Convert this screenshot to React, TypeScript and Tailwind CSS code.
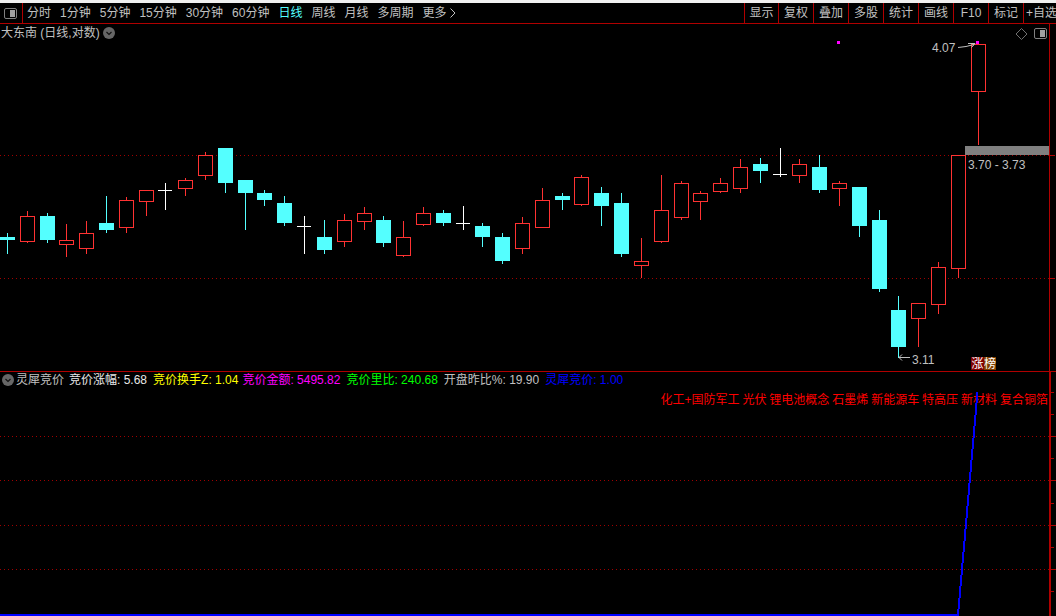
type Candle = [number, "r" | "c" | "w", number, number, number, number];

// x, kind, high, body top, body bottom, low
const candles: Candle[] = [
  [7, "c", 233, 237, 240, 254],
  [27, "r", 211, 216, 241, 243],
  [47, "c", 213, 216, 240, 243],
  [66, "r", 224, 240, 244, 257],
  [86, "r", 221, 233, 248, 254],
  [106, "c", 196, 223, 230, 233],
  [126, "r", 197, 200, 227, 233],
  [146, "r", 190, 190, 201, 216],
  [165, "w", 183, 190, 190, 210],
  [185, "r", 178, 180, 188, 196],
  [205, "r", 152, 155, 175, 180],
  [225, "c", 148, 148, 183, 193],
  [245, "c", 180, 180, 193, 230],
  [264, "c", 190, 193, 200, 206],
  [284, "c", 196, 203, 223, 226],
  [304, "w", 216, 226, 226, 254],
  [324, "c", 220, 237, 250, 254],
  [344, "r", 214, 220, 241, 247],
  [364, "r", 207, 213, 221, 230],
  [383, "c", 216, 220, 243, 247],
  [403, "r", 221, 237, 255, 257],
  [423, "r", 207, 213, 224, 226],
  [443, "c", 210, 213, 223, 226],
  [463, "w", 206, 223, 223, 230],
  [482, "c", 223, 226, 237, 247],
  [502, "c", 233, 237, 261, 264],
  [522, "r", 217, 223, 248, 254],
  [542, "r", 188, 200, 227, 227],
  [562, "c", 193, 196, 200, 210],
  [581, "r", 175, 177, 204, 206],
  [601, "c", 187, 193, 206, 226],
  [621, "c", 193, 203, 254, 257],
  [641, "r", 238, 261, 265, 278],
  [661, "r", 175, 210, 241, 243],
  [681, "r", 181, 183, 217, 220],
  [700, "r", 191, 193, 201, 220],
  [720, "r", 178, 183, 191, 193],
  [740, "r", 159, 167, 188, 193],
  [760, "c", 158, 164, 171, 183],
  [780, "w", 148, 174, 174, 177],
  [799, "r", 159, 164, 175, 183],
  [819, "c", 155, 167, 190, 193],
  [839, "r", 181, 183, 188, 206],
  [859, "c", 187, 187, 226, 237],
  [879, "c", 210, 220, 289, 292],
  [898, "c", 296, 310, 347, 358],
  [918, "r", 303, 303, 318, 347],
  [938, "r", 262, 267, 304, 314],
  [958, "r", 155, 155, 268, 278],
  [978, "r", 44, 44, 91, 145],
];

const periods = ["分时", "1分钟", "5分钟", "15分钟", "30分钟", "60分钟", "日线", "周线", "月线", "多周期"];
const tools: [string, string][] = [
  ["显示", "w-[34px]"],
  ["复权", "w-[35px]"],
  ["叠加", "w-[35px]"],
  ["多股", "w-[35px]"],
  ["统计", "w-[35px]"],
  ["画线", "w-[35px]"],
  ["F10", "w-[35px]"],
  ["标记", "w-[35px]"],
];
const lowerGrid = [436, 480, 525, 569];

const CandleMark = ({ c }: { c: Candle }) => {
  const [x, kind, high, top, bottom, low] = c;
  const px = x + 0.5;
  if (kind === "w") {
    return (
      <g stroke="#ffffff" shapeRendering="crispEdges">
        <line x1={px} x2={px} y1={high} y2={low} />
        <line x1={x - 7} x2={x + 7} y1={top + 0.5} y2={top + 0.5} />
      </g>
    );
  }
  if (kind === "c") {
    return (
      <g shapeRendering="crispEdges">
        <line x1={px} x2={px} y1={high} y2={low} stroke="#54ffff" />
        <rect x={x - 7} y={top} width={15} height={bottom - top} fill="#54ffff" />
      </g>
    );
  }
  return (
    <g stroke="#ff3232" shapeRendering="crispEdges">
      <line x1={px} x2={px} y1={high} y2={top} />
      <line x1={px} x2={px} y1={bottom} y2={low} />
      <rect x={x - 6.5} y={top + 0.5} width={14} height={bottom - top} fill="#000000" />
    </g>
  );
};

const Chevron = () => (
  <svg width="12" height="12" viewBox="0 0 12 12" className="shrink-0">
    <circle cx="6" cy="6" r="6" fill="#666666" />
    <path d="M3.5 5 L6 7.5 L8.5 5" fill="none" stroke="#111111" strokeWidth="1.2" />
  </svg>
);

const PaneToggle = () => (
  <span className="flex h-[11px] w-[13px] justify-end rounded-[2px] border border-[#808080] p-px">
    <span className="h-full w-[5px] bg-[#a0a0a0]" />
  </span>
);

export default function App() {
  return (
    <div
      className="flex h-[616px] w-[1056px] flex-col overflow-hidden bg-black text-[12px] leading-none text-[#c0c0c0]"
      style={{ fontFamily: '"Liberation Sans", "Noto Sans CJK SC", sans-serif' }}
    >
      <div className="h-[3px] shrink-0 bg-[#f0f0f0]" />

      {/* toolbar */}
      <div className="flex h-[21px] shrink-0 items-center border-b border-[#b00000]">
        <div className="flex h-full w-[23px] shrink-0 items-center justify-center border-r border-[#b00000] pr-px">
          <PaneToggle />
        </div>
        <div className="flex items-center gap-[9px] pl-[4px]">
          {periods.map((p) => (
            <span key={p} className={p === "日线" ? "text-[#54ffff]" : ""}>
              {p}
            </span>
          ))}
          <span className="flex items-center gap-[3px]">
            更多
            <svg width="6" height="10" viewBox="0 0 6 10">
              <path d="M0.5 0.5 L5 5 L0.5 9.5" fill="none" stroke="#c0c0c0" />
            </svg>
          </span>
        </div>
        <div className="ml-auto flex h-full">
          {tools.map(([t, w]) => (
            <span key={t} className={`flex h-full items-center justify-center border-l border-[#b00000] ${w}`}>
              {t}
            </span>
          ))}
          <span className="flex h-full w-[33px] items-center overflow-hidden whitespace-nowrap border-l border-[#b00000] pl-[2px]">
            +自选
          </span>
        </div>
      </div>

      {/* panes */}
      <div className="relative flex min-h-0 flex-1 flex-col">
        <div className="relative h-[348px] shrink-0 border-b border-[#b00000]">
          <svg width="1056" height="347" viewBox="0 24 1056 347" className="block">
            <g stroke="#a00000" strokeDasharray="1 3" shapeRendering="crispEdges">
              <line x1="0" x2="1049" y1="155.5" y2="155.5" />
              <line x1="0" x2="1049" y1="278.5" y2="278.5" />
            </g>
            <rect x="965" y="146" width="84" height="9" fill="#808080" />
            {candles.map((c) => (
              <CandleMark key={c[0]} c={c} />
            ))}
            <rect x="837" y="41" width="3" height="3" fill="#ff00ff" />
            <path d="M958 47.5 L966 46.5 L974 44.5 M968 43.5 L975 43.5 L971.5 47.5" fill="none" stroke="#c0c0c0" />
            <rect x="976" y="41" width="3" height="3" fill="#ff00ff" />
            <path d="M899 357.5 L910 357.5 M902 354.5 L899 357.5 L902 360.5" fill="none" stroke="#c0c0c0" />
            <g stroke="#b00000" shapeRendering="crispEdges">
              <line x1="1049.5" x2="1049.5" y1="24" y2="371" />
              <line x1="1050" x2="1055" y1="155.5" y2="155.5" />
              <line x1="1050" x2="1055" y1="278.5" y2="278.5" />
            </g>
            <path d="M1021.5 28.5 L1027 34 L1021.5 39.5 L1016 34 Z" fill="none" stroke="#707070" />
          </svg>

          {/* overlays on the price chart */}
          <div className="absolute left-[1px] top-[3px] flex items-center gap-[3px]">
            <span>大东南 (日线,对数)</span>
            <Chevron />
          </div>
          <div className="absolute left-[1034px] top-[4px]">
            <PaneToggle />
          </div>
          <span className="absolute left-[932px] top-[18px]">4.07</span>
          <span className="absolute left-[968px] top-[135px]">3.70 - 3.73</span>
          <span className="absolute left-[912px] top-[330px]">3.11</span>
          <div className="absolute left-[971px] top-[333px] flex text-white">
            <span className="flex h-[13px] w-[13px] items-center justify-center bg-[#800000]">涨</span>
            <span className="flex h-[13px] w-[12px] items-center justify-center bg-[#804000]">榜</span>
          </div>
        </div>

        <div className="relative min-h-0 flex-1">
          <svg width="1056" height="244" viewBox="0 372 1056 244" className="relative z-10 block">
            <g stroke="#a00000" strokeDasharray="1 3" shapeRendering="crispEdges">
              {lowerGrid.map((y) => (
                <line key={y} x1="0" x2="1049" y1={y + 0.5} y2={y + 0.5} />
              ))}
            </g>
            <rect x="1049" y="372" width="2" height="244" fill="#b00000" />
            <g stroke="#b00000" shapeRendering="crispEdges">
              {lowerGrid.map((y) => (
                <line key={y} x1="1051" x2="1056" y1={y + 0.5} y2={y + 0.5} />
              ))}
              {[392, 414, 458, 503, 547, 591].map((y) => (
                <line key={y} x1="1051" x2="1054" y1={y + 0.5} y2={y + 0.5} />
              ))}
            </g>
            <path d="M0 615 L958 615 L977.5 392" fill="none" stroke="#0000ff" strokeWidth="2" shapeRendering="crispEdges" />
          </svg>

          <div className="absolute left-[2px] top-[2px] flex items-center whitespace-nowrap">
            <Chevron />
            <span className="ml-[2px]">灵犀竞价</span>
            <span className="ml-[5px] text-[#e8e8e8]">竞价涨幅: 5.68</span>
            <span className="ml-[6px] text-[#ffff00]">竞价换手Z: 1.04</span>
            <span className="ml-[4px] text-[#ff00ff]">竞价金额: 5495.82</span>
            <span className="ml-[6px] text-[#00ff00]">竞价里比: 240.68</span>
            <span className="ml-[6px] text-[#c0c0c0]">开盘昨比%: 19.90</span>
            <span className="ml-[6px] text-[#0000ff]">灵犀竞价: 1.00</span>
          </div>
          <div className="absolute right-[8px] top-[22px] whitespace-nowrap text-[#ff0000] [word-spacing:-0.4px]">
            化工+国防军工 光伏 锂电池概念 石墨烯 新能源车 特高压 新材料 复合铜箔
          </div>
        </div>
      </div>
    </div>
  );
}
